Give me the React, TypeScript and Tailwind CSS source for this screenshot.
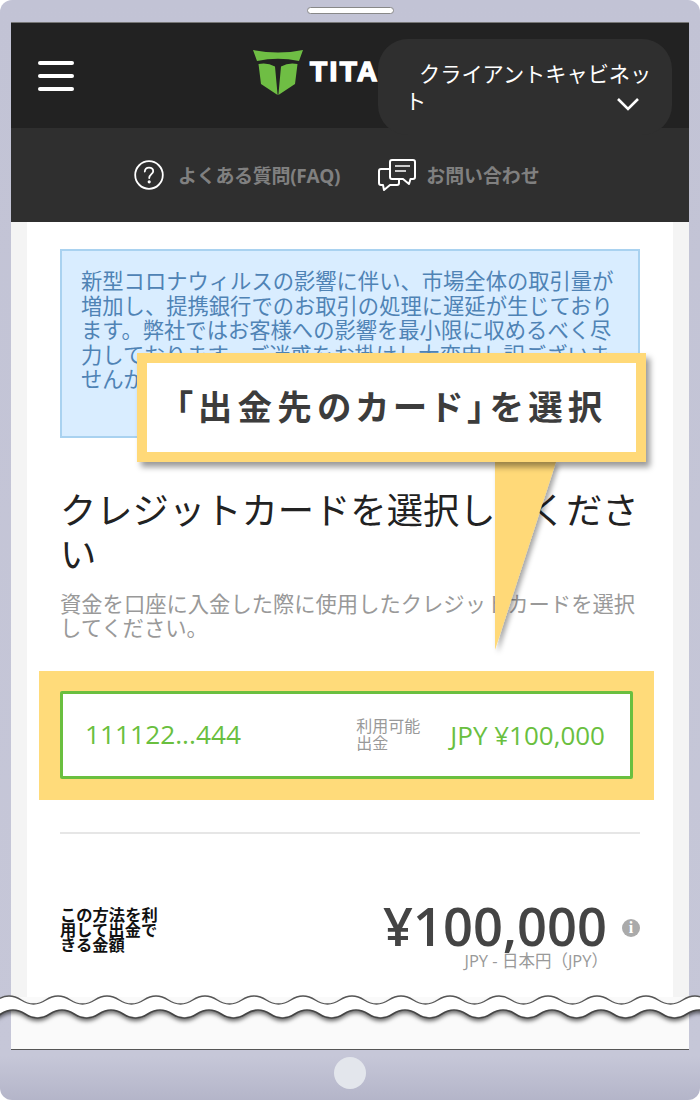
import React from 'react';

const sans = "font-['Open_Sans','Noto_Sans_CJK_JP',sans-serif]";

const PERIOD = 49;

// one wavy line, left to right
function waveForward(startX: number, y: number, count: number) {
  let d = `M${startX} ${y}`;
  for (let i = 0; i < count; i++) {
    d += ` q12.25 -8 24.5 0 q12.25 8 24.5 0`;
  }
  return d;
}

// same line walked back, to close the band
function waveBackward(count: number) {
  let d = '';
  for (let i = 0; i < count; i++) {
    d += ` q-12.25 8 -24.5 0 q-12.25 -8 -24.5 0`;
  }
  return d;
}

const TornEdge = () => {
  const count = 17;
  const topStart = -52.25;
  const bottomStart = -48.25;
  const top = waveForward(topStart, 1000, count);
  const bottom = waveForward(bottomStart, 1014, count);
  const bottomEnd = bottomStart + count * PERIOD;
  const band = `${top} L${bottomEnd} 1014 ${waveBackward(count)} Z`;
  return (
    <svg className="absolute left-0 top-[985px]" width="700" height="50" viewBox="0 985 700 50">
      <defs>
        <filter id="edge-shadow" x="-5%" y="-50%" width="110%" height="220%">
          <feDropShadow dx="0" dy="3" stdDeviation="2" floodColor="#000" floodOpacity="0.6" />
        </filter>
      </defs>
      <path d={band} fill="#fff" filter="url(#edge-shadow)" />
      <path d={top} fill="none" stroke="#555" strokeWidth="1.4" />
      <path d={bottom} fill="none" stroke="#444" strokeWidth="1.6" />
    </svg>
  );
};

const Callout = () => (
  <div className="absolute left-[137px] top-[353px] w-[509px]">
    <svg className="absolute left-[350px] top-[100px]" width="80" height="205" viewBox="0 0 80 205">
      <defs>
        <filter id="tail-shadow" x="-20%" y="-10%" width="150%" height="120%">
          <feDropShadow dx="3" dy="3" stdDeviation="2.5" floodColor="#000" floodOpacity="0.35" />
        </filter>
      </defs>
      <polygon points="8,9 69,9 8,197" fill="#ffd978" filter="url(#tail-shadow)" />
    </svg>
    <div className="relative h-[109px] border-[10px] border-[#ffd978] bg-white shadow-[4px_5px_6px_rgba(0,0,0,0.4)] flex items-center justify-center">
      <span className="mb-[3px] font-['Noto_Sans_CJK_JP',sans-serif] font-bold text-[34.5px] tracking-[5.2px] text-[#3c3c3c] whitespace-nowrap [font-feature-settings:'palt']">「出金先のカード」を選択</span>
    </div>
  </div>
);

const Logo = () => (
  <div className="flex items-start">
    <svg width="50" height="47" viewBox="0 0 50 47">
      <path d="M0 0 Q25 5 50 0 L46 11 Q25 6.5 4 11 Z" fill="#6fbe44" />
      <path d="M5.5 14 Q14 12 22 16.5 L24.6 45 L8 34 Z M44.5 14 Q36 12 28 16.5 L25.4 45 L42 34 Z" fill="#6fbe44" />
    </svg>
    <span className="ml-[7px] mt-[5px] font-['Liberation_Sans',sans-serif] font-black text-[28px] leading-[34px] tracking-[2.4px] text-white [-webkit-text-stroke:1.5px_white]">TITAN</span>
  </div>
);

const HelpIcon = () => (
  <svg width="30" height="30" viewBox="0 0 30 30" fill="none" stroke="#fff" strokeWidth="1.8" strokeLinecap="round">
    <circle cx="15" cy="15" r="13.8" />
    <path d="M10.8 11.5 C11 8.8 12.8 7.6 15 7.6 C17.4 7.6 19.2 9.1 19.2 11.2 C19.2 14 15.2 14.4 15.2 18" />
    <circle cx="15.2" cy="21.8" r="0.7" fill="#fff" />
  </svg>
);

const ChatIcon = () => (
  <svg width="38" height="32" viewBox="0 0 38 32" fill="none" stroke="#fff" strokeWidth="2" strokeLinejoin="round">
    <path d="M12 3 Q12 1 14 1 H35 Q37 1 37 3 V18 Q37 20 35 20 H32.5 L31 25 L25 20 H14 Q12 20 12 18 Z" />
    <path d="M12 10 H3 Q1 10 1 12 V24 Q1 26 3 26 H5 L6 31 L12 26 H19 Q21 26 21 24 V20" />
    <path d="M17 7 H32 M17 12 H28" strokeWidth="1.6" />
  </svg>
);

export default function App() {
  return (
    <div className={`${sans} relative w-[700px] h-[1100px] overflow-hidden bg-white`}>
      <div className="h-full rounded-[12px] bg-[linear-gradient(#c2c3d5_0%,#c6c7d8_96%,#b4b5c9_100%)] px-[11px] pt-[22px]">
        <div className="flex flex-col h-[1028px] border-b border-[#555] bg-[#fafafa]">
          <header className="h-[106px] shrink-0 bg-[#222222] border-t border-[#777] px-[27px] flex items-center">
            <div className="w-[36px] flex flex-col gap-[9px]">
              <div className="h-[4px] rounded-full bg-white" />
              <div className="h-[4px] rounded-full bg-white" />
              <div className="h-[4px] rounded-full bg-white" />
            </div>
            <div className="ml-[179px] -mt-[4px]">
              <Logo />
            </div>
          </header>

          <nav className="h-[94px] shrink-0 bg-[#2f2f2f] flex items-center pl-[123px]">
            <HelpIcon />
            <span className="ml-[14px] mt-[2px] text-[19px] font-bold text-[#808080] tracking-[-0.3px] whitespace-nowrap">よくある質問(FAQ)</span>
            <div className="ml-[38px]">
              <ChatIcon />
            </div>
            <span className="ml-[10px] mt-[2px] text-[18.9px] font-bold text-[#808080] whitespace-nowrap">お問い合わせ</span>
          </nav>

          <main className="h-[775px] shrink-0 bg-[#f4f4f4] px-[16px]">
            <div className="h-full bg-white px-[33px] pt-[27px]">
              <div className="h-[189px] border-2 border-[#a9d2f0] bg-[#d9edff] pl-[19px] pr-[18px] pt-[18px] text-[21.3px] leading-[24.6px] text-[#4f83b5]">
                新型コロナウィルスの影響に伴い、市場全体の取引量が増加し、提携銀行でのお取引の処理に遅延が生じております。弊社ではお客様への影響を最小限に収めるべく尽力しております。ご迷惑をお掛けし大変申し訳ございませんが、ご理解のほどよろしくお願いいたします。
              </div>

              <h1 className="mt-[50px] text-[36.3px] leading-[44px] text-[#222]">クレジットカードを選択してください</h1>
              <p className="mt-[16px] text-[21.3px] leading-[24px] text-[#999]">資金を口座に入金した際に使用したクレジットカードを選択してください。</p>

              <div className="mt-[31px] -ml-[21px] -mr-[14px] h-[129px] bg-[#ffdb7a] pl-[21px] pr-[21px] py-[20px]">
                <div className="h-[88px] rounded-[2px] border-[3px] border-[#6abf3f] bg-white pl-[22px] pr-[25px] flex items-center">
                  <span className="text-[26.3px] text-[#6abf3f]">111122...444</span>
                  <span className="ml-auto w-[66px] text-[16px] leading-[17px] text-[#999]">利用可能出金</span>
                  <span className="ml-[28px] text-[26px] text-[#6abf3f] whitespace-nowrap">JPY ¥100,000</span>
                </div>
              </div>

              <div className="mt-[32px] h-[2px] bg-[#e6e6e6]" />

              <div className="mt-[61px] flex items-start">
                <div className="mt-[13px] w-[100px] text-[16.3px] leading-[15px] font-bold text-[#111]">この方法を利用して出金できる金額</div>
                <div className="ml-auto flex flex-col items-end">
                  <div className="flex items-center">
                    <span className="text-[52.4px] leading-[62px] font-semibold text-[#444] whitespace-nowrap">¥100,000</span>
                    <div className="ml-[15px] mt-[3px] h-[18px] w-[18px] rounded-full bg-[#aaaaaa] text-white text-[16px] leading-[18px] font-bold text-center font-['Liberation_Serif',serif]">i</div>
                  </div>
                  <span className="-mt-[6px] mr-[32px] text-[16.5px] leading-[20px] text-[#999] whitespace-nowrap">JPY - 日本円（JPY）</span>
                </div>
              </div>
            </div>
          </main>
          <div className="h-[52px]" />
        </div>
      </div>

      {/* speaker */}
      <div className="absolute left-[307px] top-[7px] h-[7px] w-[87px] rounded-[4px] border border-[#888] bg-white" />
      {/* home button */}
      <div className="absolute left-[334px] top-[1057px] h-[32px] w-[32px] rounded-full bg-[#e3e6ec]" />

      {/* cabinet dropdown */}
      <div className="absolute left-[378px] top-[39px] h-[96px] w-[294px] rounded-[30px] bg-[#2f2f2f] pl-[27px] pr-[18px] pt-[21px] text-[21.2px] leading-[27px] text-white indent-[14px]">
        クライアントキャビネット
        <svg className="absolute left-[238px] top-[58px]" width="24" height="15" viewBox="0 0 24 15" fill="none" stroke="#fff" strokeWidth="2.6">
          <path d="M2 2 L12 12 L22 2" />
        </svg>
      </div>

      <Callout />
      <TornEdge />
    </div>
  );
}
